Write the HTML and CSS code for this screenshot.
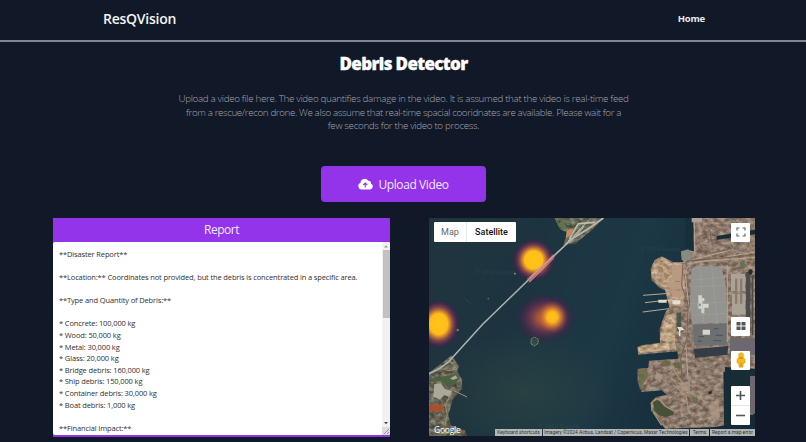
FILE: index.html
```
<!DOCTYPE html>
<html lang="en">
<head>
<meta charset="utf-8">
<title>ResQVision</title>
<link rel="stylesheet" href="styles.css">
</head>
<body>
<header class="nav"><span class="brand">ResQVision</span><a class="home">Home</a></header>
<main>
  <h1>Debris Detector</h1>
  <p class="intro">Upload a video file here. The video quantifies damage in the video. It is assumed that the video is real-time feed<br><span class="tight">from a rescue/recon drone. We also assume that real-time spacial cooridnates are available. Please wait for a</span><br>few seconds for the video to process.</p>
  <button class="upload">
    <svg width="15" height="12" viewBox="0 0 30 24"><path fill="#fff" d="M7 23a7 7 0 0 1-2-13.5A8.5 8.5 0 0 1 20.500 5.500A5 5 0 0 1 26 11.500A6 6 0 0 1 24 23Z"/><path d="M14.500 19v-8M10.500 14l4-4 4 4" fill="none" stroke="#9333ea" stroke-width="2.200"/></svg>
    <span>Upload Video</span>
  </button>
  <div class="panels">
    <section class="report">
      <h2>Report</h2>
      <div class="textbox">
        <div class="text">**Disaster Report**

**Location:** Coordinates not provided, but the debris is concentrated in a specific area.

**Type and Quantity of Debris:**

* Concrete: 100,000 kg
* Wood: 50,000 kg
* Metal: 30,000 kg
* Glass: 20,000 kg
* Bridge debris: 160,000 kg
* Ship debris: 150,000 kg
* Container debris: 30,000 kg
* Boat debris: 1,000 kg

**Financial Impact:**</div>
        <div class="scroll">
          <svg class="arrow" viewBox="0 0 8 8"><path d="M2 5.500 4 3.200 6 5.500Z" fill="#999"/></svg>
          <div class="thumb"></div>
          <svg class="arrow down" viewBox="0 0 8 8"><path d="M2 3 4 5.300 6 3Z" fill="#444"/></svg>
          <svg class="grip" viewBox="0 0 8 8"><path d="M2 7 7 2M5 7 7 5" stroke="#777" stroke-width=".7"/></svg>
        </div>
      </div>
    </section>
    <section class="map">
      <svg class="satellite" viewBox="12 18 978 654" preserveAspectRatio="none">
        <defs>
          <linearGradient id="sea" x1="0" y1="0" x2="1" y2=".25"><stop offset="0" stop-color="#20343e"/><stop offset=".35" stop-color="#1d3440"/><stop offset=".65" stop-color="#1c3845"/><stop offset="1" stop-color="#142a38"/></linearGradient>
          <radialGradient id="murk"><stop offset="0" stop-color="#2d4541" stop-opacity=".7"/><stop offset="1" stop-color="#2d4541" stop-opacity="0"/></radialGradient>
          <radialGradient id="heat"><stop offset="0" stop-color="#ffc518"/><stop offset=".41" stop-color="#ffbd19"/><stop offset=".52" stop-color="#e48b2c" stop-opacity=".9"/><stop offset=".68" stop-color="#9a4650" stop-opacity=".72"/><stop offset=".84" stop-color="#602053" stop-opacity=".45"/><stop offset="1" stop-color="#391848" stop-opacity="0"/></radialGradient>
          <radialGradient id="core"><stop offset="0" stop-color="#ffc518"/><stop offset=".32" stop-color="#fdb71c"/><stop offset=".55" stop-color="#dd8430" stop-opacity=".8"/><stop offset=".78" stop-color="#b45d3e" stop-opacity=".4"/><stop offset="1" stop-color="#903d4a" stop-opacity="0"/></radialGradient>
          <radialGradient id="warm"><stop offset="0" stop-color="#c66837" stop-opacity=".95"/><stop offset=".25" stop-color="#b45b3c" stop-opacity=".9"/><stop offset=".5" stop-color="#80384d" stop-opacity=".75"/><stop offset=".75" stop-color="#592352" stop-opacity=".45"/><stop offset="1" stop-color="#391848" stop-opacity="0"/></radialGradient>
          <filter id="ground" x="0" y="0" width="1" height="1" color-interpolation-filters="sRGB"><feTurbulence type="fractalNoise" baseFrequency=".06 .08" numOctaves="4" seed="8" result="n"/><feColorMatrix in="n" values="1.700 0 0 0 -.3  1.600 .1 0 0 -.36  1.500 .1 0 0 -.35  0 0 0 0 .3"/><feComposite in2="SourceGraphic" operator="in" result="t"/><feMerge><feMergeNode in="SourceGraphic"/><feMergeNode in="t"/></feMerge></filter>
        </defs>
        <path fill="url(#sea)" d="M0 0h1000v700H0z"/>
        <ellipse cx="300" cy="540" rx="280" ry="190" fill="url(#murk)"/>
        <g filter="url(#ground)">
          <path fill="#8c7869" d="M782 18H990V490H985V608H960V510H915V480H895L897 640 870 645 720 650 700 620 680 595 678 572 692 556 725 548 710 535 650 540 638 510 638 470 670 468 672 446 760 440 757 418 640 428 637 406 650 400 705 392 704 350 712 328 722 300 733 285 720 235 705 228 680 205 677 170 688 145 710 133 745 150 775 150 768 125 790 115 807 118 805 45Z"/>
          <path fill="#56634b" d="M388 18H536L500 55 450 95 415 98 428 62 405 52Z"/>
          <path fill="#5a5c4a" d="M12 483 80 430 102 463 97 480 110 500 112 530 84 560 70 610 78 640 120 655 125 672H12Z"/>
          <path fill="#c6a684" d="M681 165 712 135 740 153 772 155 780 220 775 280 735 286 720 230 690 210 680 190Z"/>
          <path fill="#cdb087" d="M640 405 705 393 750 390 755 412 645 422ZM725 310 752 300 750 393 705 385 710 345Z"/>
        </g>
        <path fill="#a08560" d="M700 165h14v14h-14zM715 180l20 10-14 16z"/>
        <path fill="#b89a83" d="M740 158h34v49h-34zM735 210h40v20h-40zM742 237h38v18h-38z"/>
        <path fill="#3d4c48" d="M755 302h14v55h-14z" opacity=".8"/>
        <path fill="#172f3b" d="M782 17H804V108L792 115 783 110Z"/>
        <path fill="none" stroke="#b7a894" stroke-width="3" d="M654 250 733 244M660 272 730 264M653 300 732 290"/>
        <path fill="#e5dfd1" d="M700 263h25v9h-25zM742 265h24v12h-24zM756 345h13l10 8-13 3v16h-4v-17z"/>
        <path fill="#93938f" d="M800 169 815 162 885 163 892 175 903 225 907 333 802 336 794 275Z"/>
        <path fill="#6d7070" d="M803 338 907 334 908 399 808 402Z"/>
        <path fill="#343d47" d="M806 411 910 402 907 428 810 438Z"/>
        <path stroke="#b7a48e" stroke-width="3" fill="none" d="M915 115 802 143 780 180 792 290 782 390 789 500M785 156 990 120M810 150 990 136M907 160V390M809 18V125"/>
        <path stroke="#7a604d" stroke-width="3" fill="none" d="M774 153 770 220 790 280 785 380 767 440 771 510 748 500M820 75 855 55 860 90 910 105M815 102 840 125 902 115M785 147 990 129"/>
        <path fill="#aaa197" d="M800 18h31v13h-31zM918 185h42v52h-42zM921 245h40v63h-40z"/>
        <path fill="#878a82" d="M768 118 790 112 803 127 797 145 770 145z"/>
        <path fill="#8a7b6d" d="M930 200h7v75h-7zM945 200h7v75h-7z"/>
        <path fill="#172d36" d="M875 72 990 53V67L875 83ZM900 465 990 470V495H985L975 605 975 640 897 642Z"/>
        <path fill="#6d6870" d="M915 378H990V430H915ZM975 492H990V605H975Z"/>
        <path fill="#4b4b4c" d="M963 180h13v190h-13zM980 190h5v180h-5z"/>
        <path fill="#d5d5ca" d="M820 250h11v8h7v10h-5v7h18v12h-13v17h-9v-14h-9zM833 353h22v15h-22zM828 275h-10v8h10z"/>
        <path stroke="#abada9" stroke-width="1" d="M800 205 900 195M798 225 903 220M795 275 905 270M800 310 905 304M825 163 836 335M860 163 877 334"/>
        <path stroke="#51575a" stroke-width="4" d="M820 374h18M866 350h14M872 370h22M818 387h12M865 386h25"/>
        <path fill="#475137" d="M684 570 700 562 716 582 746 599 744 609 723 615 701 610 688 597Z"/>
        <path stroke="#a59377" stroke-width="4" fill="none" d="M681 598 679 573 692 560 706 565 722 583 752 600M684 600 710 640M734 456 787 535 842 570M746 520 783 550 790 595"/>
        <path fill="#626a42" opacity=".75" d="M640 475 665 472 669 493 644 533ZM710 448 735 446 738 460 710 464ZM745 454l20-3 3 15-20 3zM800 558l17-5 1 20-12 3z"/>
        <path fill="#b09888" opacity=".7" d="M760 513 795 508 795 535 772 540ZM694 480l20 8-8 22-18-10zM850 580l30-20 5 55-20 14z"/>
        <path fill="#252e25" d="M849 540l10-4 2 8-8 3zM970 175l8-4 6 8-6 11-8-6z"/>
        <path fill="#65734c" d="M944 150l13-5 4 17-14 5zM400 35l16-10 8 22-14 5zM470 34l14-13 9 8-22 18z"/>
        <path fill="#4c6140" d="M13 500 94 487 103 500 87 520 65 520 48 508 13 511Z"/>
        <path fill="#a9a89a" d="M28 517 47 513 59 530 81 537 75 556 58 549 45 563 25 553ZM75 499l17-9 6 9-14 5z"/>
        <path fill="#a5502f" d="M13 582 28 575 39 580 51 575 56 590 46 600 22 596 12 604Z"/>
        <path fill="none" stroke="#9d9475" stroke-width="3" d="M45 465 77 449 96 472 65 476M80 539 61 581 67 607 60 640M85 535 126 555M12 652 47 665 100 660"/>
        <path fill="none" stroke="#a7a397" stroke-width="6" d="M430 87 492 49 535 18M433 80 460 35 510 31M433 92 477 42"/>
        <path fill="none" stroke="#d1d1c8" stroke-width="2" d="M430 87 492 49 535 18M433 80 460 35 510 31M420 97 495 22"/>
        <path fill="#bf8e61" d="M425 57l19-8-2 18-20 11z"/>
        <path fill="none" stroke="#637d80" stroke-width="1.500" opacity=".4" d="M117 257 139 276"/>
        <circle cx="270" cy="185" r="2.500" fill="#99a4a2"/><circle cx="98" cy="354" r="4" fill="#8f888d"/><circle cx="190" cy="260" r="2.500" fill="#557075"/>
        <path fill="#344d3e" stroke="#8d9b77" stroke-width="3" stroke-dasharray="4 2" d="M319 380 329 375 340 381 339 394 329 402 318 396Z"/>
        <ellipse cx="326" cy="144" rx="66" ry="66" fill="url(#heat)"/>
        <ellipse cx="41" cy="336" rx="66" ry="76" fill="url(#heat)"/>
        <ellipse cx="362" cy="318" rx="92" ry="76" fill="url(#warm)"/>
        <ellipse cx="382" cy="315" rx="48" ry="50" fill="url(#core)"/>
        <path fill="none" stroke="#aeb4b0" stroke-width="4.500" d="M12 485Q60 466 90 428L173 337 310 204 432 89"/>
        <path fill="none" stroke="#e17b77" stroke-opacity=".65" stroke-width="10" d="M312 207 387 130"/>
        <path fill="none" stroke="#d6aaa4" stroke-width="2" d="M306 202 382 135 432 89M311 212 387 139"/>
        <g class="watermark"><text x="150" y="187">© 2024 Google</text><text x="645" y="116">© 2024 Google</text><text x="340" y="648">© 2024 Google</text></g>
      </svg>
      <div class="maptype"><span>Map</span><b>Satellite</b></div>
      <div class="controls">
        <div class="control full"><svg width="10" height="10" viewBox="0 0 10 10"><path d="M1 3.500V1H3.500M6.500 1H9V3.500M9 6.500V9H6.500M3.500 9H1V6.500" fill="none" stroke="#666" stroke-width="1.200"/></svg></div>
        <div class="control tiles"><svg width="10" height="8" viewBox="0 0 10 8"><path d="M.5 0h4v3.500h-4zM5.500 0h4v3.500h-4zM.5 4.500h4V8h-4zM5.500 4.500h4V8h-4z" fill="#555"/></svg></div>
        <div class="control person"><svg width="10" height="16" viewBox="0 0 10 16"><path d="M2.500 5.500H7.500L9 7.500V11H7.500L6.800 15.200H3.200L2.500 11H1V7.500Z" fill="#fbb917" stroke="#d88b13" stroke-width=".5"/><circle cx="5" cy="3.300" r="2.500" fill="#fbb917" stroke="#d88b13" stroke-width=".5"/><path d="M3 5.900Q5 7.300 7 5.900M5 11V15" fill="none" stroke="#ca7812" stroke-width=".8"/></svg></div>
        <div class="zooms"><div><svg width="9" height="9" viewBox="0 0 9 9"><path d="M4.500 0V9M0 4.500H9" stroke="#555" stroke-width="1.600"/></svg></div><div><svg width="9" height="9" viewBox="0 0 9 9"><path d="M0 4.500H9" stroke="#555" stroke-width="1.600"/></svg></div></div>
      </div>
      <span class="google">Google</span>
      <div class="credits"><span class="c1">Keyboard shortcuts</span><span class="c2">Imagery ©2024 Airbus, Landsat / Copernicus, Maxar Technologies</span><span class="c3">Terms</span><span class="c4">Report a map error</span></div>
    </section>
  </div>
</main>
</body>
</html>
```
FILE: styles.css
```
* { box-sizing: border-box; }
body { margin: 0; width: 806px; height: 442px; overflow: hidden; background: #111827; color: #fff; font-family: "Open Sans", "Noto Sans", sans-serif; }
svg { display: block; flex: none; }
.nav { height: 42px; border-bottom: 2px solid #80868f; padding: 0 101px 4px 103px; display: flex; align-items: center; justify-content: space-between; }
.brand { font: 600 14px "Open Sans", sans-serif; letter-spacing: -.25px; color: #f3f4f6; }
.home { font: 700 9.5px "Open Sans", sans-serif; color: #e8eaf0; letter-spacing: -.2px; }
main { display: flex; flex-direction: column; align-items: center; }
h1 { margin: 10px 0 0; padding-left: 1px; font: 800 17px/24px "Open Sans", sans-serif; letter-spacing: -.65px; white-space: nowrap; -webkit-text-stroke: .3px #fff; }
.intro { margin: 16px 0 0; padding-left: 1px; font: 300 9.8px/13.6px "Open Sans", sans-serif; color: #a0a6b1; text-align: center; white-space: nowrap; letter-spacing: -.33px; }
.tight { letter-spacing: -.39px; }
.upload { margin-top: 33px; margin-left: 1px; width: 165px; height: 36px; flex: none; border: 0; border-radius: 4px; background: #9333ea; color: #f3e8ff; display: flex; align-items: center; justify-content: center; gap: 5px; font: 400 12px "Open Sans", sans-serif; letter-spacing: -.4px; padding: 1px 0 0; }
.panels { width: 100%; margin-top: 16px; padding-left: 53px; display: flex; gap: 39px; }
.report { width: 337px; height: 219px; background: #9333ea; }
h2 { margin: 0; height: 24px; text-align: center; font: 400 12px/23px "Open Sans", sans-serif; letter-spacing: -.5px; color: #f3e8ff; }
.textbox { height: 193px; display: flex; background: #fff; border-radius: 2px; overflow: hidden; }
.text { flex: 1; padding: 7px 0 0 6px; white-space: pre; color: #303030; font: 400 7.5px/11.6px "Open Sans", sans-serif; letter-spacing: -.135px; }
.scroll { width: 8px; background: #f1f1f1; display: flex; flex-direction: column; }
.arrow, .grip { width: 8px; height: 8px; }
.thumb { height: 68px; margin: 0 .5px; background: #c1c1c1; }
.down { margin-top: auto; }
.grip { background: #ddd; }
.map { position: relative; width: 326px; height: 218px; overflow: hidden; font-family: Roboto, sans-serif; }
.satellite { width: 326px; height: 218px; }
.watermark { font: 18px Roboto, sans-serif; fill: #8aa0a0; opacity: .1; }
.maptype { position: absolute; left: 5px; top: 4px; width: 82px; height: 20px; display: flex; background: #fff; border-radius: 1px; align-items: center; font-size: 9px; color: #666; }
.maptype span { width: 33px; height: 20px; line-height: 20px; text-align: center; border-right: 1px solid #e9e9e9; }
.maptype b { flex: 1; text-align: center; color: #111; font-weight: 500; }
.controls { position: absolute; right: 5px; top: 5px; width: 19px; }
.control { height: 19px; display: flex; align-items: center; justify-content: center; background: #fff; border-radius: 1px; }
.tiles { margin-top: 75px; }
.person { margin-top: 15px; }
.zooms { margin-top: 16px; height: 39px; background: #fff; border-radius: 1px; }
.zooms div { height: 19px; display: flex; align-items: center; justify-content: center; }
.zooms div + div { height: 20px; border-top: 1px solid #e6e6e6; }
.google { position: absolute; left: 5px; bottom: 0; font: 500 8.5px/12px "Open Sans", sans-serif; letter-spacing: -.25px; color: #fff; }
.credits { position: absolute; left: 66px; right: 0; bottom: 0; height: 7px; display: flex; gap: 1px; color: #333; font-size: 4.9px; line-height: 7px; white-space: nowrap; }
.credits span { background: rgba(220,220,215,.78); text-align: center; }
.c1 { width: 47px; }
.c2 { width: 146px; }
.c3 { width: 19px; }
.c4 { flex: 1; }
```
